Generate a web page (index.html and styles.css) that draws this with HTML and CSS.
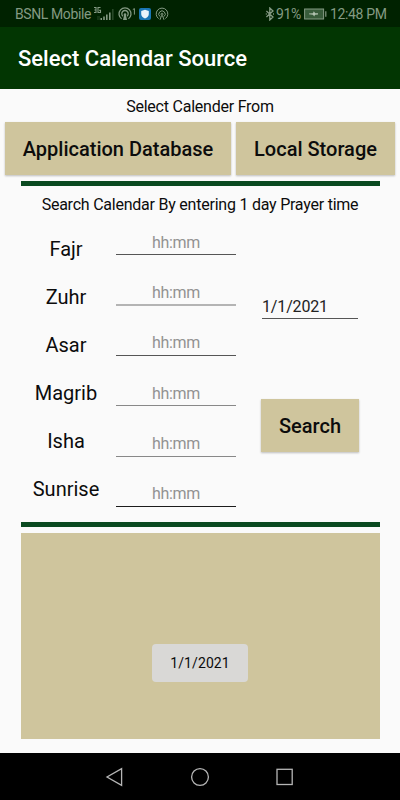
FILE: index.html
```html
<!DOCTYPE html>
<html lang="en">
    <head>
        <meta charset="UTF-8">
        <title>Select Calendar Source</title>
        <link rel="stylesheet" href="styles.css">
    </head>
    <body>
        <div class="status">
            <span class="carrier">BSNL Mobile</span>
            <svg class="status-icons" width="78" height="20" viewBox="0 0 78 20">
                <!-- 3G signal -->
                <g fill="none" stroke="#849a83" stroke-width="1.1">
                    <path d="M1 3.5h2v5H1M1.4 6H3M7.5 3.5H5v5h2.5V6.4H6.2"/>
                </g>
                <path d="M4 12.5h3v1H4zM4 14.5h3v1H4z" fill="#274827"/>
                <path d="M7.5 14H9v2H7.5zM10.2 12.5h1.6V16h-1.6zM13 10.5h1.6V16H13zM16 8.5h1.6V16H16z" fill="#849a83"/>
                <path d="M19 5h1.6v11H19z" fill="#274827"/>
                <!-- hotspot -->
                <g fill="none" stroke="#849a83" stroke-width="1.3">
                    <path d="M28.6 14.8a6 6 0 1 1 6.8 0M30 12.2a3.2 3.2 0 1 1 4 0"/>
                    <path d="M39.8 5.6l1.6-1v6" stroke-width="1"/>
                </g>
                <path d="M30 16l1-4.6a1.3 1.3 0 1 1 2 0l1 4.6z" fill="#849a83"/>
                <!-- shield -->
                <rect x="46" y="4" width="12" height="12" rx="2" fill="#1976b5"/>
                <path d="M52 5.8l3.8 1.2v3c0 2.2-1.6 3.6-3.8 4.4-2.2-.8-3.8-2.2-3.8-4.4V7z" fill="#e8f4fb"/>
                <!-- hotspot -->
                <g fill="none" stroke="#849a83" stroke-width="1">
                    <path d="M65.6 14.6a5.8 5.8 0 1 1 6.8 0M67 12.6a3.2 3.2 0 1 1 4 0"/>
                    <path d="M67 15.8l1.4-4h1.2l1.4 4"/>
                    <circle cx="69" cy="10.2" r="1"/>
                </g>
            </svg>
            <svg class="bluetooth" width="10" height="14" viewBox="0 0 10 14">
                <path d="M1.4 4l6.6 6-3.2 3V1L8 4l-6.6 6M.8 7h.9M8 7h.9" fill="none" stroke="#849a83" stroke-width="1.3"/>
            </svg>
            <span class="percent">91%</span>
            <svg class="battery" width="24" height="12" viewBox="0 0 24 12">
                <rect x=".6" y="1" width="19" height="10" fill="#385c3a" stroke="#849a83" stroke-width="1"/>
                <path d="M21.2 3.2h1.2v5.6h-1.2z" fill="#849a83"/>
                <path d="M5 5.5l4-.2.8-2 1.4 2H14v1.2l-3 .2-.8 1.8-1.2-1.8-4-.4z" fill="#b4c4b2"/>
            </svg>
            <span class="clock">12:48 PM</span>
        </div>
        <header class="toolbar">Select Calendar Source</header>

        <main>
            <p class="heading">Select Calender From</p>
            <div class="sources">
                <button class="btn database">Application Database</button>
                <button class="btn storage">Local Storage</button>
            </div>
            <div class="rule"></div>
            <p class="heading search-heading">Search Calendar By entering 1 day Prayer time</p>

            <div class="search">
                <ul class="labels">
                    <li>Fajr</li>
                    <li>Zuhr</li>
                    <li>Asar</li>
                    <li>Magrib</li>
                    <li>Isha</li>
                    <li>Sunrise</li>
                </ul>
                <div class="times">
                    <div class="time"><input type="text" placeholder="hh:mm"></div>
                    <div class="time"><input class="soft" type="text" placeholder="hh:mm"></div>
                    <div class="time"><input type="text" placeholder="hh:mm"></div>
                    <div class="time"><input class="light" type="text" placeholder="hh:mm"></div>
                    <div class="time"><input class="light" type="text" placeholder="hh:mm"></div>
                    <div class="time"><input class="dark" type="text" placeholder="hh:mm"></div>
                </div>
                <div class="actions">
                    <input class="date" type="text" value="1/1/2021">
                    <button class="btn">Search</button>
                </div>
            </div>

            <div class="rule"></div>
            <div class="results">
                <div class="toast">1/1/2021</div>
            </div>
        </main>

        <nav>
            <svg width="20" height="20" viewBox="0 0 20 20"><path d="M16.6 1.6v16.8L2 10z"/></svg>
            <svg width="20" height="20" viewBox="0 0 20 20"><circle cx="10" cy="10" r="8.4"/></svg>
            <svg width="20" height="20" viewBox="0 0 20 20"><rect x="2" y="2.3" width="15.2" height="15.2"/></svg>
        </nav>
    </body>
</html>
```
FILE: styles.css
```css
* {
    box-sizing: border-box;
}

body {
    margin: 0;
    width: 400px;
    height: 800px;
    display: flex;
    flex-direction: column;
    overflow: hidden;
    background-color: #fafafa;
    color: #0c0c0c;
    font-family: Roboto, sans-serif;
}

.status {
    height: 27px;
    display: flex;
    align-items: center;
    padding: 1px 13px 0 15px;
    background-color: #002200;
    color: #849a83;
    font-size: 14px;
    letter-spacing: -0.4px;
    line-height: 27px;
    white-space: nowrap;
}

.carrier {
    width: 78px;
}

.bluetooth {
    margin-left: auto;
}

.percent {
    width: 25px;
    margin-left: 1px;
}

.battery {
    margin: 0 2px 0 3px;
}

.clock {
    width: 57px;
    letter-spacing: -0.35px;
}

.toolbar {
    height: 62px;
    padding-left: 18px;
    background-color: #023602;
    color: white;
    font-size: 22px;
    font-weight: 500;
    line-height: 64px;
}

main {
    height: 664px;
    display: flex;
    flex-direction: column;
}

.heading {
    height: 33px;
    margin: 0;
    font-size: 16px;
    letter-spacing: -0.23px;
    line-height: 35px;
    text-align: center;
    white-space: nowrap;
}

.search-heading {
    height: 36px;
    line-height: 37px;
}

.sources {
    display: flex;
    gap: 5px;
    padding: 0 5px;
    margin-bottom: 6px;
}

.btn {
    height: 53px;
    padding: 0;
    border: none;
    background-color: #cfc59d;
    box-shadow: 0 1px 2px rgba(0, 0, 0, 0.25);
    color: #0c0c0c;
    font-family: Roboto, sans-serif;
    font-size: 20px;
    font-weight: 500;
    white-space: nowrap;
}

.database {
    width: 226px;
}

.storage {
    width: 159px;
}

.rule {
    height: 5px;
    margin: 0 20px 0 21px;
    flex-shrink: 0;
    background-color: #0a4a20;
}

.search {
    height: 300px;
    display: flex;
    padding-left: 21px;
}

.labels {
    width: 90px;
    margin: 0;
    padding: 3px 0 0;
    list-style: none;
    font-size: 20px;
    line-height: 48px;
    text-align: center;
}

.times {
    width: 120px;
    margin-left: 5px;
}

.time {
    height: 50.4px;
}

input {
    display: block;
    width: 100%;
    height: 33px;
    padding: 8px 0 0;
    border: none;
    border-bottom: 1px solid #555;
    outline: none;
    background: none;
    color: #222;
    font-family: Roboto, sans-serif;
    font-size: 16px;
    letter-spacing: -0.3px;
    text-align: center;
}

input::placeholder {
    color: #929292;
}

.soft {
    height: 34px;
    border-bottom: 2px solid #b4b4b4;
}

.light {
    border-color: #888;
}

.dark {
    border-color: #1c1c1c;
}

.actions {
    width: 98px;
    margin-left: 25px;
    padding-top: 64px;
}

.date {
    width: 96px;
    margin: 0 0 80px 1px;
    letter-spacing: -0.15px;
    text-align: left;
}

.actions .btn {
    width: 98px;
}

.results {
    height: 206px;
    margin: 6px 20px 0 21px;
    padding: 111px 0 0 131px;
    background-color: #cfc59d;
}

.toast {
    width: 96px;
    height: 38px;
    border-radius: 4px;
    background-color: #d9d8d6;
    font-size: 14px;
    letter-spacing: 0.1px;
    line-height: 39px;
    text-align: center;
}

nav {
    height: 47px;
    display: flex;
    justify-content: center;
    align-items: center;
    gap: 65px;
    background-color: black;
}

nav svg {
    fill: none;
    stroke: #b5b5b5;
    stroke-width: 1.3;
}
```
